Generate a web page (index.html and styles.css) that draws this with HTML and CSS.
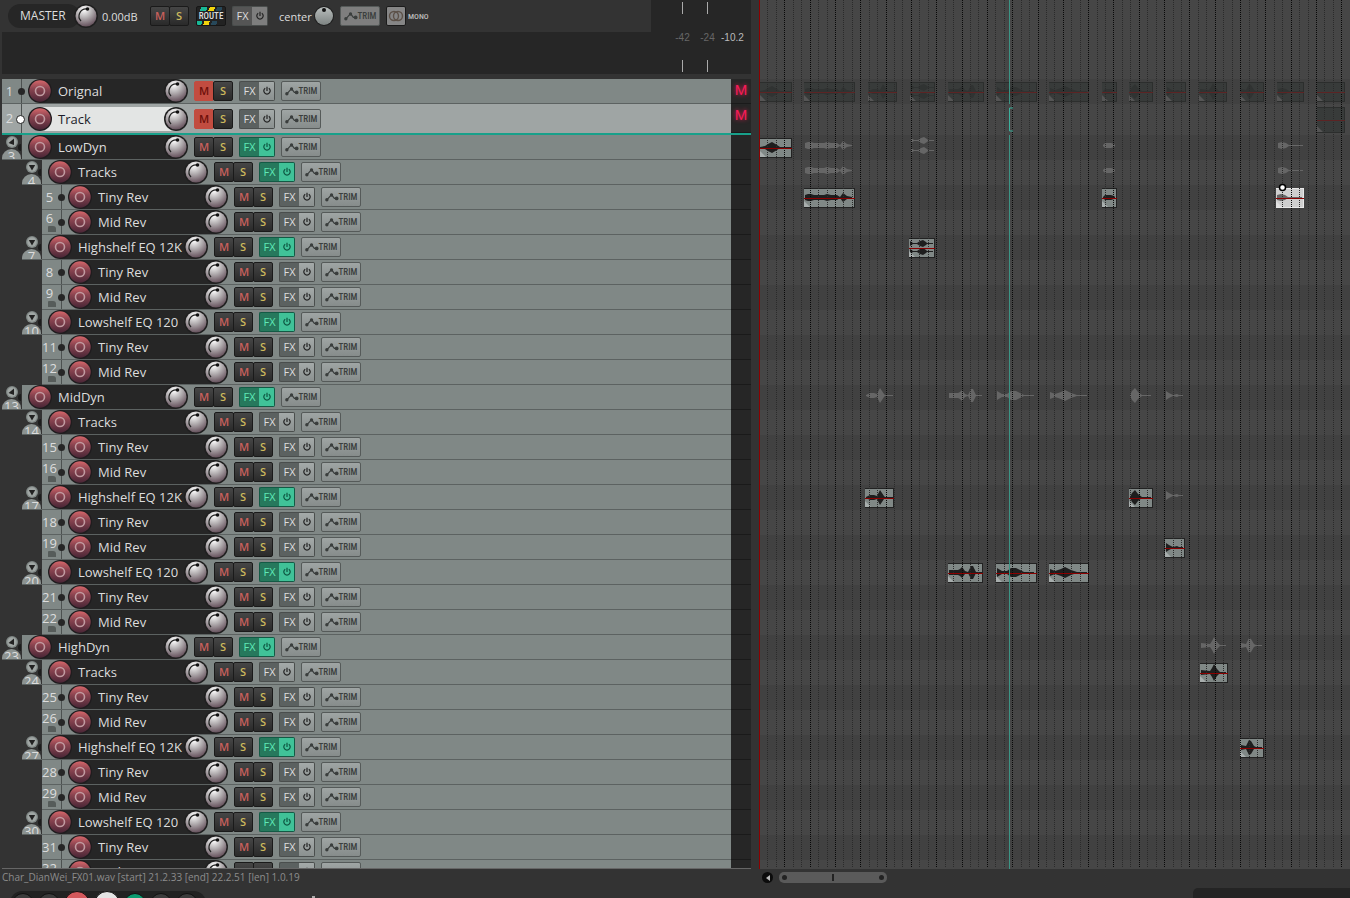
FILE: index.html
```html
<!DOCTYPE html>
<html lang="en">
<head>
    <meta charset="UTF-8">
    <title>Tracks</title>
    <link rel="stylesheet" href="styles.css">
</head>
<body>
    <svg class="defs" aria-hidden="true">
        <defs>
            <radialGradient id="knobFill" cx="40%" cy="20%" r="85%">
                <stop offset="0" stop-color="#fff"/>
                <stop offset="0.45" stop-color="#b4b0b2"/>
                <stop offset="1" stop-color="#5e4854"/>
            </radialGradient>
            <linearGradient id="panFill" x1="0" y1="0" x2="0" y2="1">
                <stop offset="0" stop-color="#b9bebd"/>
                <stop offset="1" stop-color="#7d8382"/>
            </linearGradient>
            <linearGradient id="recFill" x1="0" y1="0" x2="0" y2="1">
                <stop offset="0" stop-color="#d5666a"/>
                <stop offset="0.4" stop-color="#8a4450"/>
                <stop offset="1" stop-color="#4a2636"/>
            </linearGradient>
        </defs>
        <symbol id="knob" viewBox="0 0 24 24">
            <circle cx="12" cy="12" r="12" fill="#1f1f1f"/>
            <circle cx="12" cy="12" r="10.5" fill="url(#knobFill)"/>
            <path d="M7 17A7 7 0 0 1 5.500 9.500 7.500 7.500 0 0 1 13 5" fill="none" stroke="#222" stroke-width="1.300"/>
            <circle cx="13.500" cy="5" r="1.800" fill="#111"/>
        </symbol>
        <symbol id="pan" viewBox="0 0 24 24">
            <circle cx="12" cy="12" r="10" fill="#1f1f1f"/>
            <circle cx="12" cy="12" r="9" fill="url(#panFill)"/>
            <circle cx="12" cy="6" r="2" fill="#111"/>
        </symbol>
        <symbol id="rec" viewBox="0 0 24 24">
            <circle cx="12" cy="12" r="12" fill="#1f1c1e"/>
            <circle cx="12" cy="12" r="10.700" fill="url(#recFill)"/>
            <circle cx="12" cy="12" r="4.500" fill="none" stroke="#c09aa0" stroke-width="1.600"/>
        </symbol>
        <symbol id="power" viewBox="0 0 10 10">
            <path d="M3.200 2.200A3.200 3.200 0 1 0 6.800 2.200M5 0.800V5" fill="none" stroke="currentColor" stroke-width="1.200"/>
        </symbol>
        <symbol id="env" viewBox="0 0 15 10">
            <path d="M2 8L7 2.500L10 6.500H13" fill="none" stroke="currentColor" stroke-width="1.300"/>
            <circle cx="2" cy="8" r="1.800" fill="currentColor"/>
            <circle cx="7" cy="2.800" r="1.800" fill="currentColor"/>
            <circle cx="12.500" cy="6.500" r="2" fill="currentColor"/>
        </symbol>
        <symbol id="fold" viewBox="0 0 14 14">
            <circle cx="7" cy="7" r="6" fill="#808886"/>
            <circle cx="7" cy="7" r="4.700" fill="#a0a6a4"/>
            <path d="M3.800 5H10.200L7 10.500Z" fill="#222"/>
        </symbol>
        <symbol id="foldTop" viewBox="0 0 14 14">
            <circle cx="7" cy="7" r="6" fill="#808886"/>
            <circle cx="7" cy="7" r="4.700" fill="#a0a6a4"/>
            <path d="M3.500 8L9 3.500V10Z" fill="#222"/>
        </symbol>
    </svg>

    <div class="app">
        <section class="tcp">
            <header class="master">
                <div class="master-main">
                    <div class="master-bar">
                        <div class="master-name">MASTER</div>
                        <svg class="knob"><use href="#knob"/></svg>
                        <span class="volume">0.00dB</span>
                        <div class="pair"><button class="btn mute">M</button><button class="btn solo">S</button></div>
                        <button class="btn route">ROUTE</button>
                        <div class="pair fx dim"><button class="btn fx-name">FX</button><button class="btn fx-power" aria-label="Bypass"><svg class="power"><use href="#power"/></svg></button></div>
                        <span class="center">center</span>
                        <svg class="knob pan"><use href="#pan"/></svg>
                        <button class="btn trim dim"><svg class="env"><use href="#env"/></svg>TRIM</button>
                        <button class="btn mono" aria-label="Mono">
                            <svg width="16" height="12" viewBox="0 0 16 12"><g fill="none" stroke="#5c5148" stroke-width="1.400"><circle cx="6" cy="6" r="4.500"/><circle cx="10" cy="6" r="4.500"/></g></svg>
                        </button>
                        <span class="mono-label">MONO</span>
                    </div>
                </div>
                <div class="master-meter">
                    <div class="scale"><i></i><span>-42</span><i></i></div>
                    <div class="scale"><i></i><span>-24</span><i></i></div>
                    <div class="peak">-10.2</div>
                </div>
            </header>
            <div class="tracks" id="tracks"></div>
            <footer class="status">
                <p>Char_DianWei_FX01.wav [start] 21.2.33 [end] 22.2.51 [len] 1.0.19</p>
                <div class="transport">
                    <div class="group"><i></i><i></i><i class="red"></i><i class="white"></i><i class="green"></i><i></i><i></i></div>
                    <b></b>
                </div>
            </footer>
        </section>

        <section class="arrange">
            <svg class="timeline" id="timeline"></svg>
            <footer class="scroll">
                <button class="scroll-left" aria-label="Scroll left"></button>
                <div class="thumb"><i></i><b></b><i></i></div>
                <div class="dock"></div>
            </footer>
        </section>
    </div>

    <script src="tracks.js"></script>
</body>
</html>
```
FILE: styles.css
```css
* {
    box-sizing: border-box;
}
body {
    margin: 0;
    background-color: #333;
    color: #ddd;
    font-family: "Open Sans", "Noto Sans", sans-serif;
    font-size: 13px;
}
button {
    margin: 0;
    padding: 0;
    font-family: inherit;
}
.defs {
    position: absolute;
    width: 0;
    height: 0;
}
.app {
    display: flex;
    height: 100vh;
    overflow: hidden;
}
.tcp {
    flex: 0 0 759px;
    display: flex;
    flex-direction: column;
    padding-right: 8px;
}

/* master track */
.master {
    display: flex;
    height: 79px;
    padding: 0 0 5px 2px;
}
.master-main {
    flex: 1;
    background-color: #262626;
}
.master-bar {
    display: flex;
    align-items: center;
    height: 32px;
    background-color: #333;
}
.master-name {
    width: 72px;
    height: 24px;
    margin-left: 6px;
    padding-left: 12px;
    border-radius: 12px;
    background-color: #262626;
    font-size: 12px;
    line-height: 24px;
}
.master-bar .knob {
    margin-left: -6px;
}
.master-bar .volume {
    width: 48px;
    margin-left: 4px;
    font-size: 11px;
}
.master-bar .route {
    position: relative;
    z-index: 0;
    width: 30px;
    margin: 0 6px 0 7px;
    border-color: #161616;
    background: linear-gradient(110deg, #222 4px, #18b896 4px 10px, #222 10px 12px, #f2d40c 12px 17px, #222 17px 19px, #27485a 19px 24px, #222 24px);
    color: #ddd;
}
.master-bar .route::before {
    content: "";
    position: absolute;
    inset: 4px 0;
    background-color: #222;
    z-index: -1;
}
.master-bar .center {
    width: 34px;
    margin-left: 11px;
    font-size: 11px;
}
.master-bar .pan {
    margin: 0 4px 0 -1px;
}
.master-bar .mono {
    display: flex;
    align-items: center;
    justify-content: center;
    width: 20px;
    margin-left: 6px;
    background: #868686;
}
.mono-label, .trim, .route {
    font-family: "Liberation Sans Narrow", "Roboto Condensed", "Roboto", sans-serif;
    font-size: 8px;
    font-weight: 500;
}
.mono-label {
    margin-left: 2px;
    color: #bbb;
}
.master-meter {
    display: flex;
    width: 100px;
    padding: 2px 0;
    background-color: #262626;
    font-family: "Liberation Sans", sans-serif;
    font-size: 10px;
}
.scale {
    display: flex;
    flex-direction: column;
    align-items: center;
    justify-content: space-between;
    width: 25px;
    color: #666;
}
.scale:first-child {
    margin-left: 19px;
}
.scale i {
    width: 1px;
    height: 12px;
    background-color: #aaa;
}
.peak {
    align-self: center;
    margin-left: 1px;
    color: #bbb;
}

/* buttons */
.knob, .rec {
    flex: none;
    width: 24px;
    height: 24px;
}
.pair {
    display: flex;
    flex: none;
}
.btn {
    flex: none;
    width: 20px;
    height: 20px;
    border: 1px solid #1a1a1a;
    border-radius: 2px;
    background: linear-gradient(#464646, #2a2a2a);
    font-size: 11px;
    line-height: 18px;
    text-align: center;
}
.btn.trim, .btn.route {
    font-size: 9px;
}
.mute {
    color: #c8605c;
    font-weight: 600;
}
.solo {
    margin-left: -1px;
    color: #cdb95c;
    font-weight: 600;
}
.muted .mute {
    border-color: #c24c40;
    background: #c24c40;
    color: #6c0f0a;
}
.fx .btn {
    width: 20px;
    border-color: #4a4e4d;
    border-right: 0;
    border-radius: 2px 0 0 2px;
    background: #5b6160;
    color: #ddd;
}
.fx .fx-power {
    width: 16px;
    border: 1px solid #4a4e4d;
    border-left: 0;
    border-radius: 0 2px 2px 0;
    background: linear-gradient(#a4aaa9, #8b9190);
    color: #222;
}
.power {
    display: block;
    width: 10px;
    height: 10px;
    margin: 0 auto;
}
.fx.on .btn {
    border-color: #135a45;
    background: #26785c;
    color: #5fe8b6;
}
.fx.on .fx-power {
    background: #40c298;
    color: #0c5540;
}
.trim {
    display: flex;
    align-items: center;
    justify-content: center;
    width: 40px;
    border-color: #555a59;
    background: linear-gradient(#9fa5a4, #868c8b);
    color: #3a3e3d;
}
.env {
    width: 14px;
    height: 10px;
}
.dim .btn {
    background: #555;
}
.dim .fx-power, .trim.dim {
    background: #7e7e7e;
}

/* track list */
.tracks {
    flex: 1;
    overflow: hidden;
}
.track {
    display: flex;
    height: 25px;
    margin-left: 2px;
}
.strip {
    flex: 1;
    display: flex;
    align-items: center;
    border-bottom: 1px solid #5c6261;
    background-color: #808886;
}
.index {
    position: relative;
    z-index: 1;
    flex: none;
    width: 20px;
    height: 100%;
    border-right: 1px solid #4c5150;
    line-height: 24px;
    text-align: center;
    padding-right: 4px;
}
.index::after {
    content: "";
    position: absolute;
    right: -4px;
    top: calc(50% - 3px);
    width: 7px;
    height: 7px;
    border-radius: 50%;
    background-color: #262626;
}
.folder .index {
    border-color: #333;
    background-color: #333;
    overflow: hidden;
    padding: 0;
    line-height: 15px;
}
.folder .index::after {
    right: -1px;
    width: 4px;
    border-radius: 4px 0 0 4px;
    background-color: #1c1c1c;
}
.index .fold {
    display: block;
    width: 14px;
    height: 14px;
    margin: 0 0 0 3px;
}
.index .num {
    display: block;
    height: 18px;
    border-radius: 50%;
    background-color: #8c9391;
}
.last .index {
    line-height: 16px;
}
.last .index::before {
    content: "";
    position: absolute;
    left: 6px;
    bottom: 2px;
    width: 8px;
    height: 6px;
    border-radius: 1px 3px 0 0;
    background-color: #565c5a;
}
.name {
    flex: none;
    display: flex;
    align-items: center;
    width: 154px;
    height: 100%;
    margin-right: 18px;
    padding-left: 6px;
    background: linear-gradient(to right, transparent 18px, #262626 18px);
    white-space: nowrap;
}
.name span {
    flex: 0 0 118px;
    padding-left: 6px;
}
.name .knob {
    margin-left: -6px;
}
.track .fx {
    margin: 0 6px;
}
.meter {
    flex: none;
    width: 20px;
    border-bottom: 1px solid #1a1a1a;
    background-color: #262626;
    color: #f81c58;
    font-family: "Liberation Sans", sans-serif;
    font-size: 15px;
    line-height: 22px;
    text-align: center;
    text-shadow: 0 0 4px #f01850;
}
.indent {
    flex: none;
}
.selected {
    height: 31px;
    border-bottom: 2px solid #18a08a;
}
.selected .strip {
    border-bottom: 0;
    background-color: #9fa5a4;
}
.selected .index {
    line-height: 29px;
}
.selected .index::after {
    top: 11px;
    border: 1px solid #222;
    background-color: #fff;
}
.selected .name {
    height: 24px;
    background: linear-gradient(to right, transparent 18px, #e3e5e4 18px);
    color: #1c1c2a;
}

/* status line and transport */
.status {
    height: 30px;
    margin-left: 2px;
    border-top: 1px solid #666;
    overflow: hidden;
}
.status p {
    margin: 0;
    color: #8c8c8c;
    font-size: 10px;
    line-height: 16px;
}
.transport {
    display: flex;
    margin: 6px 0 0 8px;
}
.group {
    display: flex;
    gap: 4px;
    width: 196px;
    height: 30px;
    padding: 2px 0 0 2px;
    border-radius: 12px;
    background-color: #222;
}
.group i {
    width: 22px;
    height: 22px;
    border: 1px solid #111;
    border-radius: 50%;
    background-color: #3c3c3c;
}
.group .red, .group .white {
    width: 26px;
    height: 26px;
    margin-top: -2px;
}
.group .red { background-color: #d4585c; }
.group .white { background-color: #e4e4e4; }
.group .green { background-color: #0c9c70; }
.transport b {
    width: 3px;
    height: 10px;
    margin: 5px 0 0 106px;
    background-color: #aaa;
}

/* arrange view */
.arrange {
    flex: 1;
    min-width: 0;
    display: flex;
    flex-direction: column;
}
.timeline {
    flex: 1;
    display: block;
    width: 100%;
    min-height: 0;
    border-left: 1px solid #8c0000;
    background-color: #464646;
}
.scroll {
    display: flex;
    height: 29px;
    padding: 3px 0 0 3px;
}
.scroll-left {
    display: flex;
    align-items: center;
    justify-content: center;
    width: 11px;
    height: 11px;
    border: 0;
    border-radius: 50%;
    background-color: #0c0c0c;
}
.scroll-left::before {
    content: "";
    border: 3px solid transparent;
    border-right: 4px solid #bbb;
    border-left: 0;
}
.thumb {
    display: flex;
    align-items: center;
    justify-content: space-between;
    width: 108px;
    height: 11px;
    margin-left: 6px;
    padding: 0 3px;
    border-radius: 5px;
    background-color: #5a5a5a;
}
.thumb i {
    width: 5px;
    height: 5px;
    border-radius: 50%;
    background-color: #222;
}
.thumb b {
    width: 2px;
    height: 7px;
    background-color: #222;
}
.dock {
    flex: 0 0 157px;
    height: 20px;
    margin: 16px 0 0 auto;
    border-top-left-radius: 5px;
    background-color: #242424;
}
```
FILE: tracks.js
```js
// name, depth, fx on, flags
var tracks = [
    ["Orignal", 0, 0, "muted"],
    ["Track", 0, 0, "muted selected"]
];
["LowDyn", "MidDyn", "HighDyn"].forEach(function (group) {
    tracks.push([group, 0, 1, "folder"]);
    ["Tracks", "Highshelf EQ 12K", "Lowshelf EQ 120"].forEach(function (sub) {
        // the plain "Tracks" folder only has fx in the first group
        var on = sub != "Tracks" || group == "LowDyn";
        tracks.push([sub, 1, on, "folder"]);
        tracks.push(["Tiny Rev", 2, 0, ""]);
        tracks.push(["Mid Rev", 2, 0, "last"]);
    });
});

var html = "";
tracks.forEach(function (t, i) {
    var folder = t[3] == "folder";
    var index = i + 1;
    if (folder) {
        index = '<svg class="fold"><use href="#' + (t[1] ? "fold" : "foldTop") + '"/></svg><span class="num">' + index + '</span>';
    }
    html += '<div class="track ' + t[3] + '">' +
        '<div class="indent" style="width:' + t[1] * 20 + 'px"></div>' +
        '<div class="strip">' +
        '<div class="index">' + index + '</div>' +
        '<div class="name"><svg class="rec"><use href="#rec"/></svg><span>' + t[0] + '</span><svg class="knob"><use href="#knob"/></svg></div>' +
        '<div class="pair"><button class="btn mute">M</button><button class="btn solo">S</button></div>' +
        '<div class="pair fx' + (t[2] ? " on" : "") + '"><button class="btn fx-name">FX</button><button class="btn fx-power" aria-label="Bypass"><svg class="power"><use href="#power"/></svg></button></div>' +
        '<button class="btn trim"><svg class="env"><use href="#env"/></svg>TRIM</button>' +
        '</div>' +
        '<div class="meter">' + (t[3].indexOf("muted") > -1 ? "M" : "") + '</div>' +
        '</div>';
});
document.getElementById("tracks").innerHTML = html;

// envelopes: x, half height
var waves = {
    a: [[0, 0], [5, 1], [8, 3], [12, 5], [17, 2], [20, 0], [31, 0]],
    b: [[1, 2], [4, 3], [7, 3], [10, 2], [20, 2], [23, 3], [27, 2], [33, 2], [36, 0], [39, 4], [43, 1], [48, 0]],
    c: [[1, 0], [5, 2], [9, 2], [12, 1], [15, 7], [19, 1], [20, 0], [28, 0]],
    d: [[1, 2], [4, 0], [8, 0], [11, 2], [14, 3], [17, 1], [18, 0], [24, 0]],
    e: [[1, 2], [10, 2], [12, 3], [14, 5], [17, 1], [20, 0], [23, 6], [25, 6], [28, 0], [34, 0]],
    f: [[1, 4], [6, 1], [11, 1], [15, 4], [20, 4], [28, 0], [38, 0]],
    g: [[1, 3], [6, 1], [12, 3], [16, 5], [22, 2], [28, 0], [38, 0]],
    h: [[1, 0], [3, 2], [9, 2], [12, 1], [13, 0]],
    i: [[1, 0], [3, 4], [6, 7], [9, 3], [13, 0], [22, 0]],
    j: [[1, 4], [4, 2], [8, 0], [12, 1], [14, 0], [18, 0]],
    k: [[1, 2], [10, 1], [12, 4], [14, 8], [17, 3], [20, 0], [26, 0]],
    l: [[1, 2], [6, 1], [9, 7], [11, 6], [14, 1], [16, 0], [22, 0]],
    m: [[1, 2], [5, 3], [9, 2], [12, 0], [26, 0]]
};

// x, width, wave
var muted = [[0, 32, "a"], [44, 51, "b"], [108, 29, "c"], [150, 25, "d"], [188, 36, "e"], [236, 41, "f"], [289, 40, "g"],
    [342, 15, "h"], [369, 24, "i"], [406, 20, "j"], [439, 28, "k"], [480, 24, "l"], [517, 27, "m"], [557, 28, ""]];
// x, y, width, wave
var items = [[0, 138, 32, "a"], [44, 188, 51, "b"], [342, 188, 15, "h"], [149, 238, 26, "d"], [105, 488, 29, "c"], [369, 488, 24, "i"],
    [405, 538, 20, "j"], [188, 563, 35, "e"], [236, 563, 41, "f"], [289, 563, 40, "g"], [440, 663, 28, "k"], [480, 738, 24, "l"]];
// x, center y, wave
var ghosts = [[44, 145, "b"], [44, 170, "b"], [150, 140, "d"], [150, 150, "d"], [342, 145, "h"], [342, 170, "h"], [517, 145, "m"], [517, 170, "m"],
    [105, 395, "c"], [188, 395, "e"], [236, 395, "f"], [289, 395, "g"], [369, 395, "i"], [405, 395, "j"], [405, 495, "j"],
    [440, 645, "k"], [480, 645, "l"]];

function wave(x, y, name, color) {
    if (!name) {
        return "";
    }
    var top = [], bottom = [];
    waves[name].forEach(function (p) {
        top.push((x + p[0]) + "," + (y - p[1]));
        bottom.unshift((x + p[0]) + "," + (y + p[1] + 1));
    });
    return '<polygon points="' + top.concat(bottom).join(" ") + '" fill="' + color + '"/>';
}

function rect(x, y, w, h, fill) {
    return '<rect x="' + x + '" y="' + y + '" width="' + w + '" height="' + h + '" fill="' + fill + '"/>';
}

function clip(x, y, w, h, name, c) {
    var mid = y + Math.floor(h / 2);
    var s = rect(x, y, w, h, c.edge) + rect(x, y + 1, w - 1, h - 2, c.fill);
    if (name == "d") {
        s += wave(x, mid - 5, name, c.wave) + wave(x, mid + 3, name, c.wave);
    } else {
        s += wave(x, mid - 1, name, c.wave);
    }
    s += '<path d="M' + x + " " + (y + h - 7) + "l6 6h-6z" + '" fill="' + c.corner + '"/>';
    return s;
}

function draw() {
    var svg = document.getElementById("timeline");
    var width = svg.clientWidth, height = svg.clientHeight;
    var s = "";

    // lanes, every other one darker
    var y = 79;
    tracks.forEach(function (t, i) {
        var h = i == 1 ? 31 : 25;
        s += rect(0, y, width, h, i % 2 ? "#464646" : "#414141");
        y += h;
    });

    var dark = {edge: "#2c2e2d", fill: "#383b3a", wave: "#303332", corner: "#555"};
    var normal = {edge: "#222", fill: "#808886", wave: "#1e1e1e", corner: "#a8aead"};
    var light = {edge: "#e8e8e8", fill: "#cfcfcf", wave: "#666", corner: "#e0e0e0"};
    muted.forEach(function (m) {
        s += clip(m[0], 82, m[1], 20, m[2], dark);
    });
    s += clip(557, 107, 28, 26, "", dark);
    ghosts.forEach(function (g) {
        s += wave(g[0], g[1], g[2], "#666");
    });
    items.forEach(function (m) {
        s += clip(m[0], m[1], m[2], 20, m[3], normal);
    });
    s += clip(516, 188, 28, 20, "m", light);

    // grid: beats with two subdivisions
    for (var n = 1; n * 8.44 < width; n++) {
        var x = Math.round(n * 8.44 - 1) + 0.5;
        var beat = n % 3 == 0;
        s += '<path d="M' + x + " 0V" + (height - 2) + '" stroke="' + (beat ? "#080808" : "#2a2a2a") + '" stroke-dasharray="1 1"/>';
    }

    // volume lines stay above the grid
    muted.forEach(function (m) {
        s += rect(m[0], 92, m[1], 1, "#5c2424");
    });
    s += rect(557, 120, 28, 1, "#5c2424");
    items.forEach(function (m) {
        s += rect(m[0], m[1] + 10, m[2], 1, "#8a0000");
    });
    s += rect(516, 198, 28, 1, "#8a0000");

    // edit cursor
    s += rect(249, 0, 1, 104, "#3c9484") + rect(249, 135, 1, height, "#3c9484");
    s += '<path d="M253 108H249.500V131H253" fill="none" stroke="#3cb09c"/>';

    s += '<circle cx="522.500" cy="187.500" r="3" fill="#fff" stroke="#000" stroke-width="1.500"/>';
    svg.innerHTML = s;
}

draw();
window.onresize = draw;
```
